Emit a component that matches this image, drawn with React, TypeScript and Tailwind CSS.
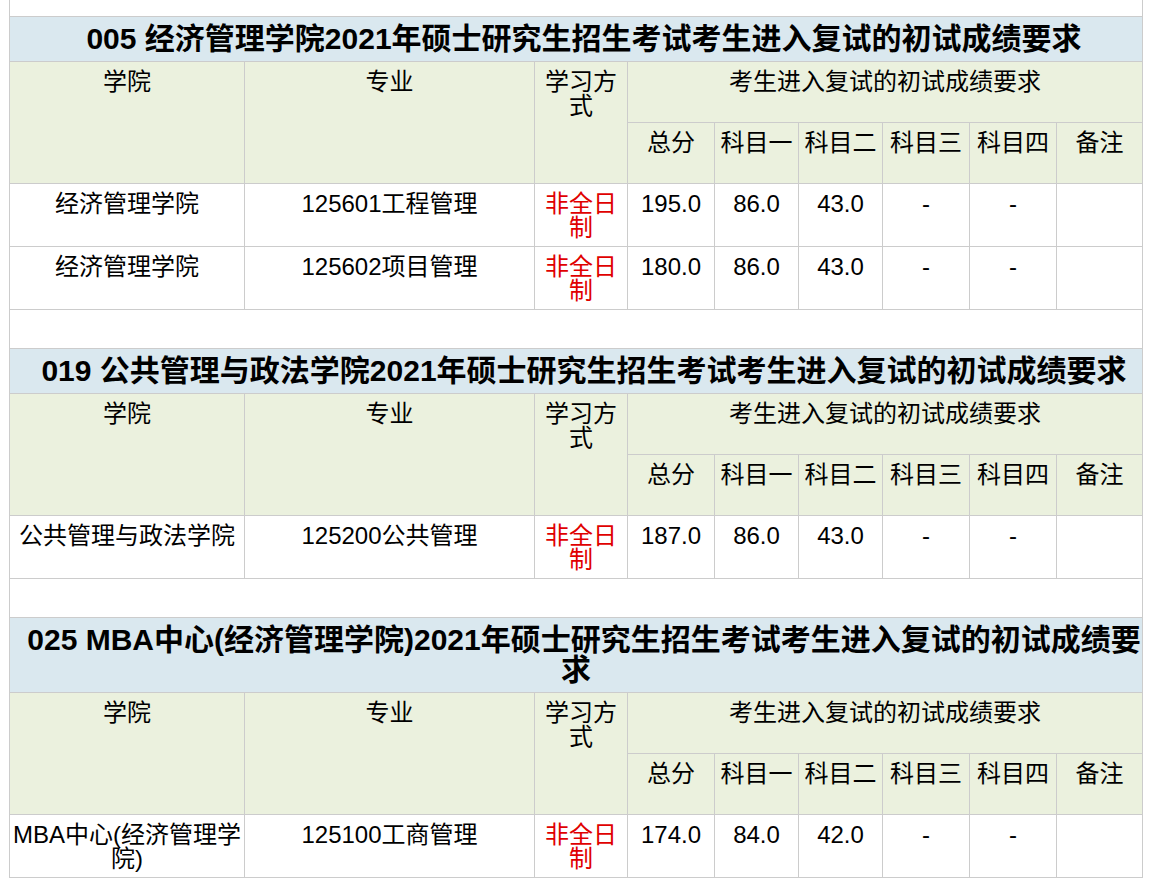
import { Fragment } from 'react';

type Row = [string, string, string, string, string, string, string, string, string];

const SECTIONS: { title: string; rows: Row[] }[] = [
  {
    title: '005 经济管理学院2021年硕士研究生招生考试考生进入复试的初试成绩要求',
    rows: [
      ['经济管理学院', '125601工程管理', '非全日制', '195.0', '86.0', '43.0', '-', '-', ''],
      ['经济管理学院', '125602项目管理', '非全日制', '180.0', '86.0', '43.0', '-', '-', ''],
    ],
  },
  {
    title: '019 公共管理与政法学院2021年硕士研究生招生考试考生进入复试的初试成绩要求',
    rows: [['公共管理与政法学院', '125200公共管理', '非全日制', '187.0', '86.0', '43.0', '-', '-', '']],
  },
  {
    title: '025 MBA中心(经济管理学院)2021年硕士研究生招生考试考生进入复试的初试成绩要求',
    rows: [['MBA中心(经济管理学院)', '125100工商管理', '非全日制', '174.0', '84.0', '42.0', '-', '-', '']],
  },
];

const SUBJECTS = ['总分', '科目一', '科目二', '科目三', '科目四', '备注'];

const cell = 'border border-[#cccccc] align-top text-center px-[2px] pt-[8px] text-[24px] leading-[24px]';
const head = `${cell} bg-[#ebf1de]`;

function Section({ title, rows, first }: { title: string; rows: Row[]; first: boolean }) {
  return (
    <>
      {!first && (
        <tr className="h-[39px]">
          <td colSpan={9} className="border border-[#cccccc]" />
        </tr>
      )}
      {/* title keeps a first-line indent, so only its first line sits a bit right of centre */}
      <tr className={title.length > 40 ? 'h-[75px]' : 'h-[45px]'}>
        <td colSpan={9} className="border border-[#cccccc] bg-[#dae8ef] text-center align-middle font-bold text-[30px] leading-[30px] px-0 indent-[16px]">
          {title}
        </td>
      </tr>
      <tr className="h-[61px]">
        <td rowSpan={2} className={head}>学院</td>
        <td rowSpan={2} className={head}>专业</td>
        <td rowSpan={2} className={head}>学习方式</td>
        <td colSpan={6} className={head}>考生进入复试的初试成绩要求</td>
      </tr>
      <tr className="h-[61px]">
        {SUBJECTS.map((s) => (
          <td key={s} className={head}>{s}</td>
        ))}
      </tr>
      {rows.map((r, i) => (
        <tr key={i} className="h-[63px]">
          {r.map((v, j) => (
            <td key={j} className={`${cell} ${j === 2 ? 'text-[#e00000]' : 'text-black'}`}>{v}</td>
          ))}
        </tr>
      ))}
    </>
  );
}

export default function App() {
  return (
    <div className="bg-white min-h-[881px] pl-[9px] font-['Liberation_Sans','Noto_Sans_CJK_SC',sans-serif] text-black">
      <table className="table-fixed border-collapse w-[1134px]">
        <colgroup>
          <col className="w-[235px]" />
          <col className="w-[290px]" />
          <col className="w-[93px]" />
          <col className="w-[87px]" />
          <col className="w-[84px]" />
          <col className="w-[84px]" />
          <col className="w-[87px]" />
          <col className="w-[87px]" />
          <col className="w-[86px]" />
        </colgroup>
        <tbody>
          <tr className="h-[16px]">
            <td colSpan={9} className="border border-t-0 border-[#cccccc]" />
          </tr>
          {SECTIONS.map((s, i) => (
            <Fragment key={s.title}>
              <Section title={s.title} rows={s.rows} first={i === 0} />
            </Fragment>
          ))}
        </tbody>
      </table>
    </div>
  );
}
